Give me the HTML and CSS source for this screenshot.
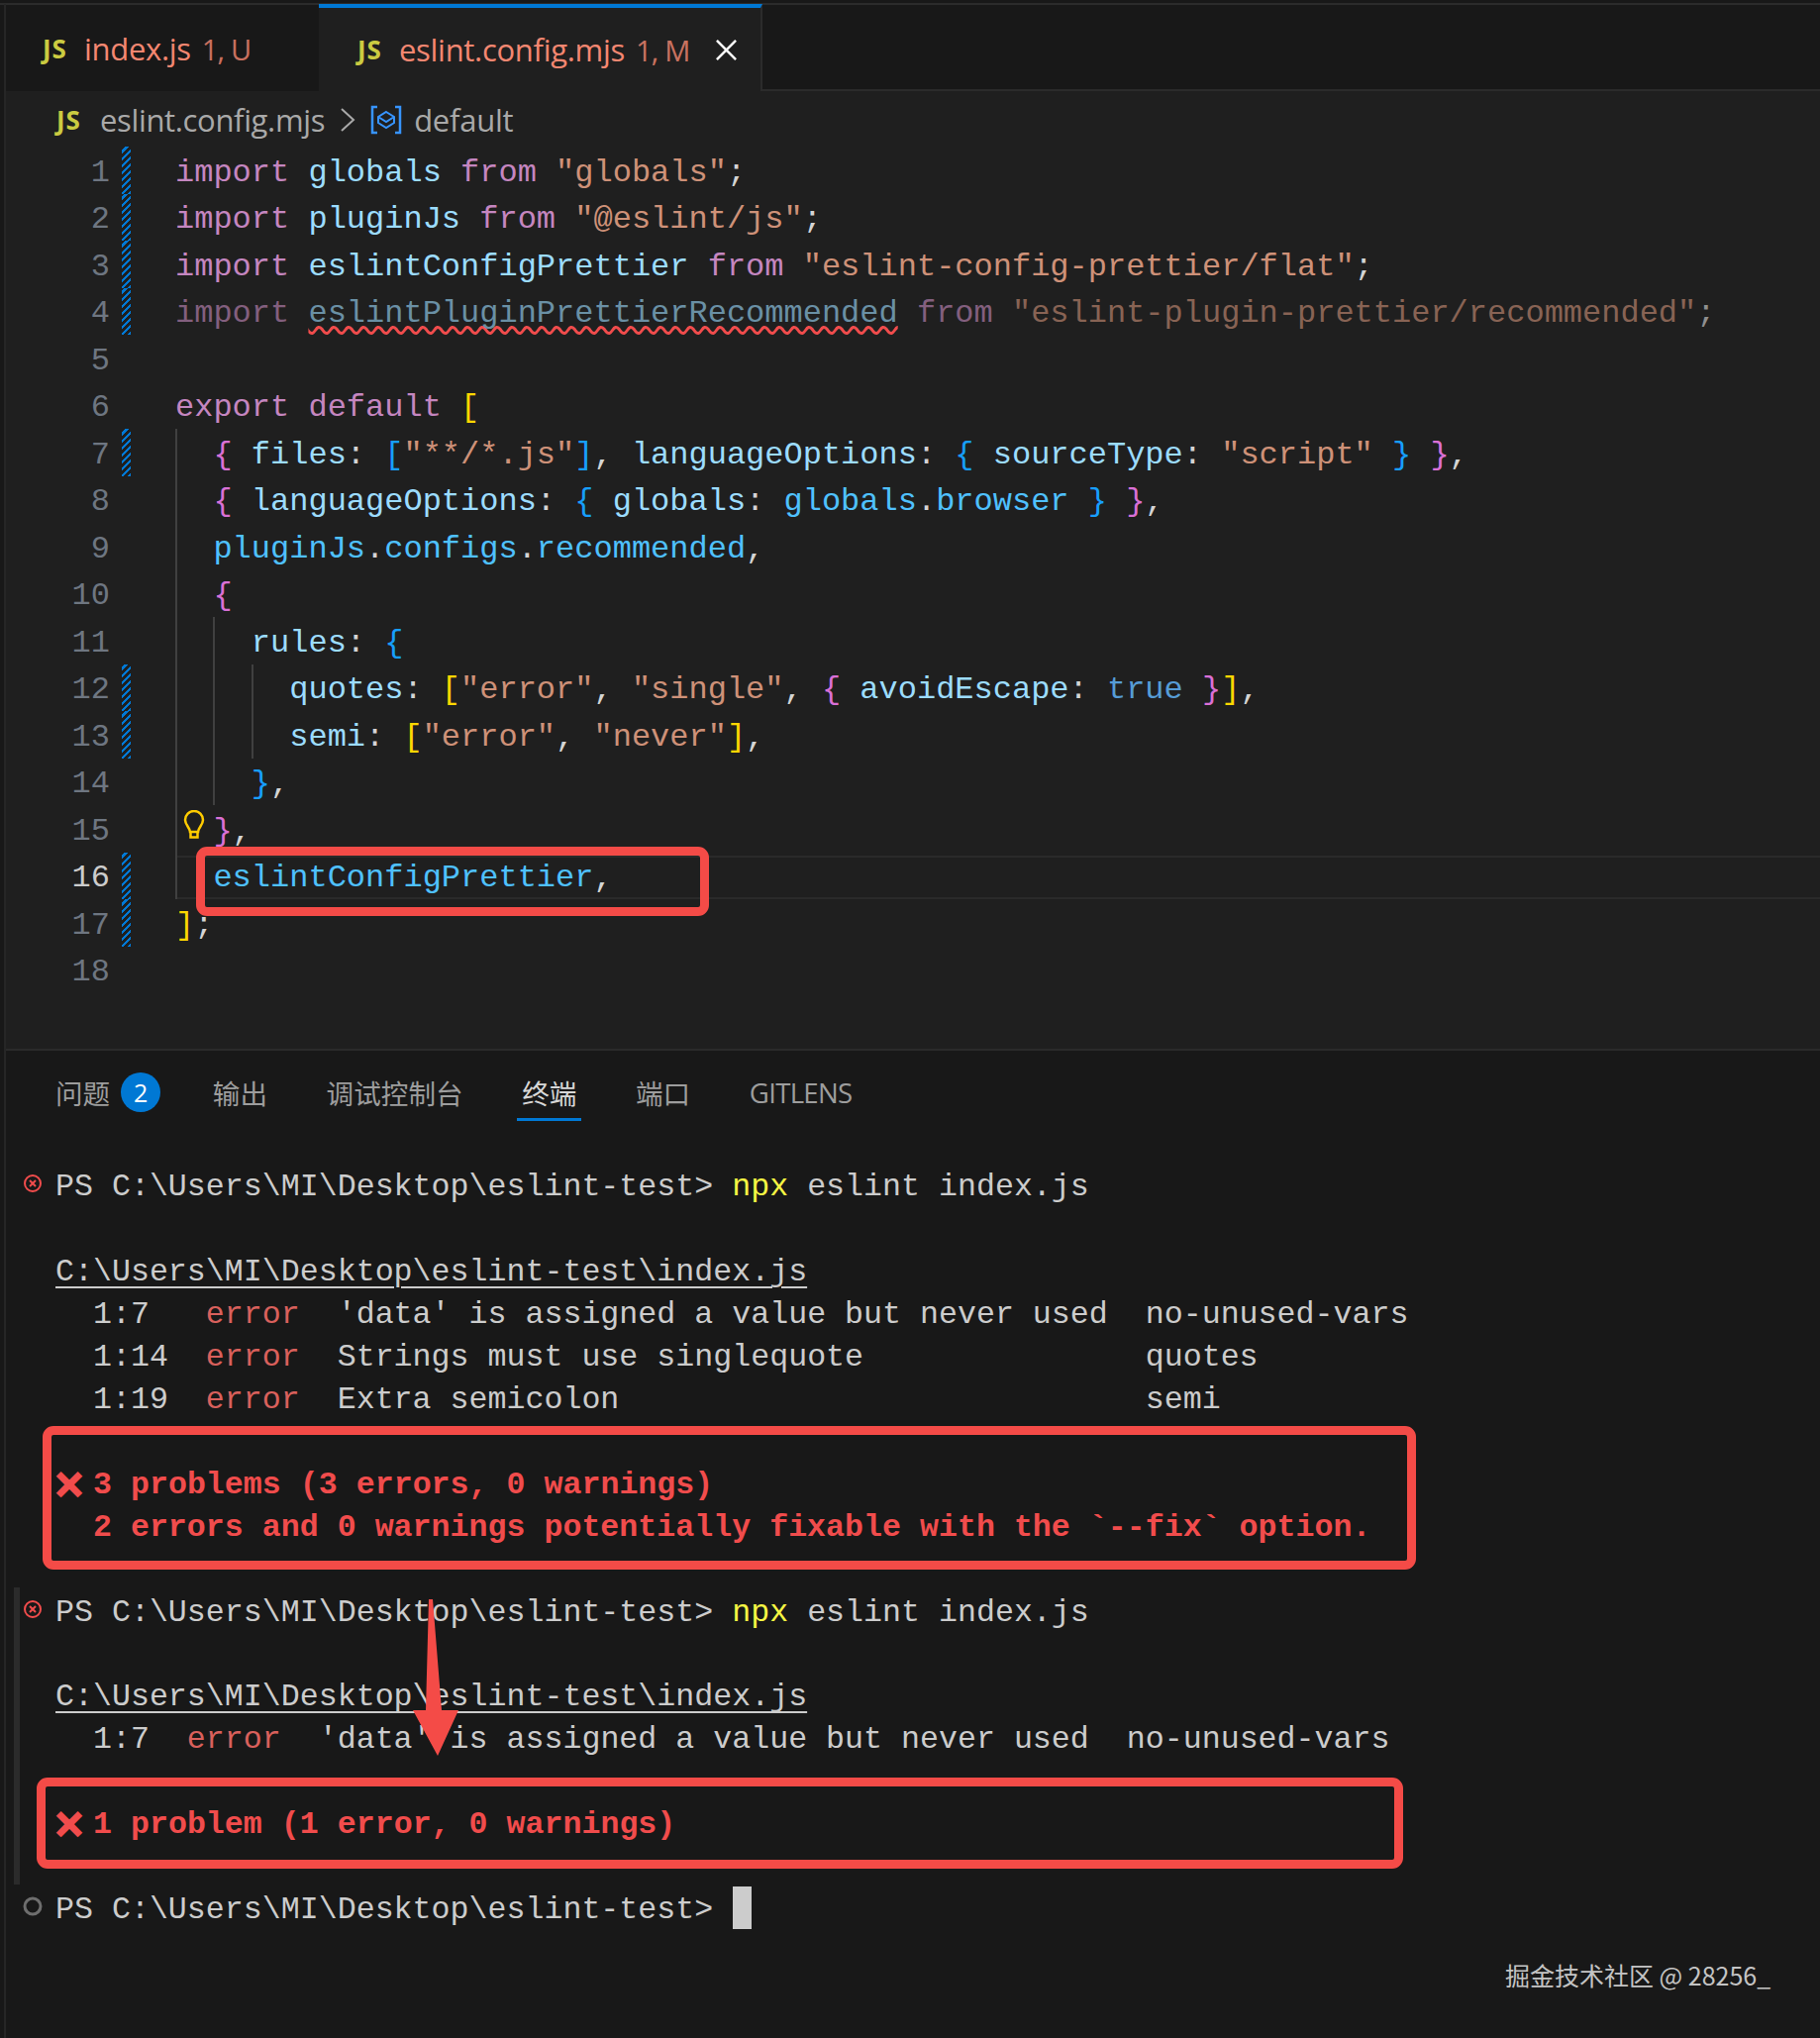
FILE: index.html
```html
<!DOCTYPE html>
<html lang="zh">
<head>
<meta charset="utf-8">
<title>eslint.config.mjs</title>
<link rel="stylesheet" href="styles.css">
</head>
<body>
<div class="app">
  <div class="tabbar">
    <div class="tab tab-first"><span class="js">JS</span><span class="tab-name">index.js</span><span class="tab-state">1, U</span></div>
    <div class="tab tab-active"><span class="js">JS</span><span class="tab-name">eslint.config.mjs</span><span class="tab-state">1, M</span>
      <svg class="tab-close" viewBox="0 0 24 24"><path d="M2 2 22 22M22 2 2 22"/></svg></div>
  </div>
  <div class="crumbs">
    <span class="js">JS</span><span class="crumb-file">eslint.config.mjs</span>
    <svg class="chev" viewBox="0 0 16 26"><path d="M2 2 14 13 2 24"/></svg>
    <svg class="sym" viewBox="0 0 32 30"><path class="sym-b" d="M7 2H2V28H7M25 2H30V28H25"/><path class="sym-c" d="M16 7 24 12V18L16 23 8 18V12ZM8 12 16 17 24 12"/></svg>
    <span class="crumb-sym">default</span>
  </div>
  <div class="editor">
    <div class="row"><span class="num">1</span><span class="gut mod"></span><span class="code"><span class="k">import</span> <span class="v">globals</span> <span class="k">from</span> <span class="s">"globals"</span><span class="p">;</span></span></div>
    <div class="row"><span class="num">2</span><span class="gut mod"></span><span class="code"><span class="k">import</span> <span class="v">pluginJs</span> <span class="k">from</span> <span class="s">"@eslint/js"</span><span class="p">;</span></span></div>
    <div class="row"><span class="num">3</span><span class="gut mod"></span><span class="code"><span class="k">import</span> <span class="v">eslintConfigPrettier</span> <span class="k">from</span> <span class="s">"eslint-config-prettier/flat"</span><span class="p">;</span></span></div>
    <div class="row"><span class="num">4</span><span class="gut mod"></span><span class="code faded"><span class="k">import</span> <span class="v squiggle">eslintPluginPrettierRecommended</span> <span class="k">from</span> <span class="s">"eslint-plugin-prettier/recommended"</span><span class="p">;</span></span></div>
    <div class="row"><span class="num">5</span><span class="gut"></span><span class="code"></span></div>
    <div class="row"><span class="num">6</span><span class="gut"></span><span class="code"><span class="k">export</span> <span class="k">default</span> <span class="b1">[</span></span></div>
    <div class="row"><span class="num">7</span><span class="gut mod"></span><span class="code g1">  <span class="b2">{</span> <span class="v">files</span><span class="p">:</span> <span class="b3">[</span><span class="s">"**/*.js"</span><span class="b3">]</span><span class="p">,</span> <span class="v">languageOptions</span><span class="p">:</span> <span class="b3">{</span> <span class="v">sourceType</span><span class="p">:</span> <span class="s">"script"</span> <span class="b3">}</span> <span class="b2">}</span><span class="p">,</span></span></div>
    <div class="row"><span class="num">8</span><span class="gut"></span><span class="code g1">  <span class="b2">{</span> <span class="v">languageOptions</span><span class="p">:</span> <span class="b3">{</span> <span class="v">globals</span><span class="p">:</span> <span class="c">globals</span><span class="p">.</span><span class="c">browser</span> <span class="b3">}</span> <span class="b2">}</span><span class="p">,</span></span></div>
    <div class="row"><span class="num">9</span><span class="gut"></span><span class="code g1">  <span class="c">pluginJs</span><span class="p">.</span><span class="c">configs</span><span class="p">.</span><span class="c">recommended</span><span class="p">,</span></span></div>
    <div class="row"><span class="num">10</span><span class="gut"></span><span class="code g1">  <span class="b2">{</span></span></div>
    <div class="row"><span class="num">11</span><span class="gut"></span><span class="code g2">    <span class="v">rules</span><span class="p">:</span> <span class="b3">{</span></span></div>
    <div class="row"><span class="num">12</span><span class="gut mod"></span><span class="code g3">      <span class="v">quotes</span><span class="p">:</span> <span class="b1">[</span><span class="s">"error"</span><span class="p">,</span> <span class="s">"single"</span><span class="p">,</span> <span class="b2">{</span> <span class="v">avoidEscape</span><span class="p">:</span> <span class="t">true</span> <span class="b2">}</span><span class="b1">]</span><span class="p">,</span></span></div>
    <div class="row"><span class="num">13</span><span class="gut mod"></span><span class="code g3">      <span class="v">semi</span><span class="p">:</span> <span class="b1">[</span><span class="s">"error"</span><span class="p">,</span> <span class="s">"never"</span><span class="b1">]</span><span class="p">,</span></span></div>
    <div class="row"><span class="num">14</span><span class="gut"></span><span class="code g2">    <span class="b3">}</span><span class="p">,</span></span></div>
    <div class="row"><span class="num">15</span><span class="gut"></span><span class="code g1">  <span class="b2">}</span><span class="p">,</span><svg class="bulb" viewBox="0 0 22 30"><path d="M7 22C7 18 2 15 2 10A9 9 0 0 1 20 10C20 15 15 18 15 22ZM7.500 22V27.500H14.500V22"/></svg></span></div>
    <div class="row row-current"><span class="num">16</span><span class="gut mod"></span><span class="code g1 current">  <span class="c">eslintConfigPrettier</span><span class="p">,</span></span></div>
    <div class="row"><span class="num">17</span><span class="gut mod"></span><span class="code"><span class="b1">]</span><span class="p">;</span></span></div>
    <div class="row"><span class="num">18</span><span class="gut"></span><span class="code"></span></div>
  </div>
  <div class="panel">
    <div class="panel-tabs">
      <div class="ptab ptab-first">问题<span class="badge">2</span></div>
      <div class="ptab">输出</div>
      <div class="ptab">调试控制台</div>
      <div class="ptab ptab-active">终端</div>
      <div class="ptab">端口</div>
      <div class="ptab ptab-latin">GITLENS</div>
    </div>
    <div class="terminal">
      <div class="sash"></div>
      <div class="tl"><svg class="deco" viewBox="0 0 20 20"><circle cx="10" cy="10" r="8"/><path d="M7 7 13 13M13 7 7 13"/></svg>PS C:\Users\MI\Desktop\eslint-test&gt; <span class="yl">npx</span> eslint index.js</div>
      <div class="tl"></div>
      <div class="tl"><span class="ul">C:\Users\MI\Desktop\eslint-test\index.js</span></div>
      <div class="tl">  1:7   <span class="er">error</span>  'data' is assigned a value but never used  no-unused-vars</div>
      <div class="tl">  1:14  <span class="er">error</span>  Strings must use singlequote               quotes</div>
      <div class="tl">  1:19  <span class="er">error</span>  Extra semicolon                            semi</div>
      <div class="tl"></div>
      <div class="tl bd"><span class="cross">✕</span>3 problems (3 errors, 0 warnings)</div>
      <div class="tl bd">  2 errors and 0 warnings potentially fixable with the `--fix` option.</div>
      <div class="tl"></div>
      <div class="tl"><svg class="deco" viewBox="0 0 20 20"><circle cx="10" cy="10" r="8"/><path d="M7 7 13 13M13 7 7 13"/></svg>PS C:\Users\MI\Desktop\eslint-test&gt; <span class="yl">npx</span> eslint index.js</div>
      <div class="tl"></div>
      <div class="tl"><span class="ul">C:\Users\MI\Desktop\eslint-test\index.js</span></div>
      <div class="tl">  1:7  <span class="er">error</span>  'data' is assigned a value but never used  no-unused-vars</div>
      <div class="tl"></div>
      <div class="tl bd"><span class="cross">✕</span>1 problem (1 error, 0 warnings)</div>
      <div class="tl"></div>
      <div class="tl"><svg class="deco deco-idle" viewBox="0 0 20 20"><circle cx="10" cy="10" r="8"/></svg>PS C:\Users\MI\Desktop\eslint-test&gt; <span class="cursor"></span></div>
    </div>
  </div>
  <div class="mark mark-config"></div>
  <div class="mark mark-summary"></div>
  <div class="mark mark-result"></div>
  <svg class="arrow" viewBox="0 0 60 170"><path d="M20 2H24L33 114H50L29 160 4 114H17Z"/></svg>
  <div class="watermark">掘金技术社区 @ 28256_</div>
</div>
</body>
</html>
```
FILE: styles.css
```css
* { box-sizing: border-box; }
html, body { margin: 0; padding: 0; background: #181818; }
.app {
  position: relative;
  width: 1838px;
  height: 2058px;
  overflow: hidden;
  display: flex;
  flex-direction: column;
  padding-top: 4px;
  padding-left: 5px;
  background: #181818;
  font-family: "Open Sans", "Noto Sans CJK SC", sans-serif;
}
.app::before {
  content: "";
  position: absolute;
  left: 0;
  right: 0;
  top: 3px;
  height: 2px;
  background: #2b2b2b;
}
.app::after {
  content: "";
  position: absolute;
  left: 4px;
  top: 4px;
  bottom: 0;
  width: 2px;
  background: #262626;
}

/* tabs */
.tabbar {
  display: flex;
  height: 88px;
  border-bottom: 2px solid #2b2b2b;
  flex: none;
}
.tab {
  display: flex;
  align-items: center;
  height: 88px;
  padding-top: 2px;
  font-size: 31px;
  color: #f48771;
}
.tab-first { width: 317px; padding-left: 38px; background: #181818; }
.tab-active {
  width: 448px;
  padding-top: 0;
  padding-left: 39px;
  background: #1f1f1f;
  border-top: 4px solid #0078d4;
  border-right: 2px solid #2b2b2b;
  position: relative;
}
.js {
  font-family: "Noto Sans", sans-serif;
  font-weight: 700;
  font-size: 26px;
  letter-spacing: .8px;
  color: #cbcb41;
  width: 28px;
  flex: none;
}
.tab-name { margin-left: 14px; letter-spacing: -.3px; }
.tab-state { margin-left: 11px; opacity: .8; font-size: 29px; letter-spacing: -.8px; }
.tab-close { width: 23px; height: 23px; margin-left: 25px; fill: none; stroke: #fff; stroke-width: 2.6; }

/* breadcrumb */
.crumbs {
  display: flex;
  align-items: center;
  height: 56px;
  flex: none;
  padding-top: 2px;
  padding-left: 52px;
  background: #1f1f1f;
  color: #a9a9a9;
  font-size: 31px;
}
.crumb-file { margin-left: 16px; letter-spacing: -.35px; }
.chev { width: 16px; height: 26px; margin-left: 15px; fill: none; stroke: #a9a9a9; stroke-width: 2; }
.sym { width: 32px; height: 30px; margin-left: 15px; fill: none; stroke-width: 2.5; }
.sym-b { stroke: #3794ff; }
.sym-c { stroke: #3794ff; stroke-width: 2; }
.crumb-sym { margin-left: 12px; letter-spacing: -.25px; }

/* editor */
.editor {
  flex: none;
  height: 911px;
  background: #1f1f1f;
  font-family: "Liberation Mono", monospace;
  font-size: 32px;
  color: #d4d4d4;
}
.row {
  display: flex;
  height: 47.5px;
  line-height: 47.5px;
  white-space: pre;
}
.num {
  width: 106px;
  flex: none;
  padding-top: 2.5px;
  text-align: right;
  color: #6e7681;
}
.row-current .num { color: #cccccc; }
.gut { width: 9px; margin-left: 12px; margin-right: 45px; flex: none; }
.mod {
  background: repeating-linear-gradient(-45deg, #0078d4 0 2.5px, transparent 2.5px 5px);
}
.code { flex: 1; position: relative; padding-top: 2.5px; }
.g1 { background: linear-gradient(#404040, #404040) 0 0 / 2px 100% no-repeat; }
.g2 {
  background:
    linear-gradient(#404040, #404040) 0 0 / 2px 100% no-repeat,
    linear-gradient(#404040, #404040) 38.4px 0 / 2px 100% no-repeat;
}
.g3 {
  background:
    linear-gradient(#404040, #404040) 0 0 / 2px 100% no-repeat,
    linear-gradient(#404040, #404040) 38.4px 0 / 2px 100% no-repeat,
    linear-gradient(#404040, #404040) 76.8px 0 / 2px 100% no-repeat;
}
.current::before {
  content: "";
  position: absolute;
  left: 2px;
  right: 0;
  top: 3px;
  bottom: 0;
  border-top: 2px solid #2a2a2a;
  border-bottom: 2px solid #2a2a2a;
}
.k { color: #c586c0; }
.v { color: #9cdcfe; }
.c { color: #4fc1ff; }
.s { color: #ce9178; }
.p { color: #d4d4d4; }
.t { color: #569cd6; }
.b1 { color: #ffd700; }
.b2 { color: #da70d6; }
.b3 { color: #179fff; }
.faded .k { color: #835f7e; }
.faded .v { color: #6a90a5; }
.faded .s { color: #886354; }
.faded .p { color: #8f8f8f; }
.squiggle {
  text-decoration: underline wavy #f14c4c 3px;
  text-decoration-skip-ink: none;
  text-underline-offset: 4px;
}
.bulb {
  position: absolute;
  left: 8px;
  top: 5px;
  width: 22px;
  height: 30px;
  fill: none;
  stroke: #ffcc00;
  stroke-width: 2.5;
}

/* panel */
.panel {
  flex: 1;
  border-top: 2px solid #2b2b2b;
  background: #181818;
  position: relative;
}
.panel-tabs {
  display: flex;
  gap: 49.6px;
  height: 114px;
  padding-left: 46px;
  padding-top: 15px;
}
.ptab {
  display: flex;
  align-items: center;
  height: 53px;
  padding: 0 5px;
  font-size: 27.6px;
  color: #9d9d9d;
}
.ptab-first { margin-right: -7px; }
.ptab-active { color: #d7d7d7; box-shadow: 0 3px 0 #0078d4; }
.ptab-latin { letter-spacing: -.7px; }
.badge {
  width: 40px;
  height: 40px;
  margin-left: 11px;
  border-radius: 50%;
  background: #0078d4;
  color: #fff;
  font-size: 25px;
  text-align: center;
  line-height: 40px;
}
.terminal {
  position: relative;
  padding-left: 51px;
  padding-top: 3.2px;
  font-family: "Liberation Mono", monospace;
  font-size: 31.63px;
  color: #cccccc;
}
.tl {
  position: relative;
  height: 42.95px;
  line-height: 42.95px;
  white-space: pre;
}
.bd { font-weight: 700; color: #f14c4c; }
.yl { color: #f5f543; }
.er { color: #d9605c; }
.ul { text-decoration: underline; text-underline-offset: 6px; text-decoration-thickness: 2px; }
.cross {
  display: inline-block;
  width: 38px;
  margin-left: -2px;
  margin-right: 2px;
  font-family: "DejaVu Sans", sans-serif;
  font-weight: 400;
  font-size: 38px;
  -webkit-text-stroke: 3px #f14c4c;
  line-height: 30px;
  vertical-align: top;
  padding-top: 6px;
}
.deco {
  position: absolute;
  left: -33px;
  top: 7px;
  width: 20px;
  height: 20px;
  fill: none;
  stroke: #f14c4c;
  stroke-width: 2;
}
.deco-idle { stroke: #6e6e6e; stroke-width: 3; }
.cursor {
  display: inline-block;
  width: 19px;
  height: 43px;
  margin-top: -3px;
  margin-left: 1px;
  background: #cccccc;
  vertical-align: top;
}
.sash {
  position: absolute;
  left: 9px;
  top: 428px;
  width: 6px;
  height: 300px;
  background: #2b2b2b;
}

/* annotations over the screenshot */
.mark {
  position: absolute;
  border: 9px solid #f44b47;
  border-radius: 11px;
}
.mark-config { left: 198px; top: 855px; width: 518px; height: 70px; }
.mark-summary { left: 43px; top: 1440px; width: 1387px; height: 145px; }
.mark-result { left: 37px; top: 1795px; width: 1380px; height: 92px; }
.arrow {
  position: absolute;
  left: 413px;
  top: 1613px;
  width: 60px;
  height: 170px;
  fill: #f44b47;
}
.watermark {
  position: absolute;
  left: 1520px;
  top: 1976px;
  font-family: "Noto Sans CJK SC", sans-serif;
  font-size: 25px;
  color: #c4c4c4;
  white-space: pre;
}
```
